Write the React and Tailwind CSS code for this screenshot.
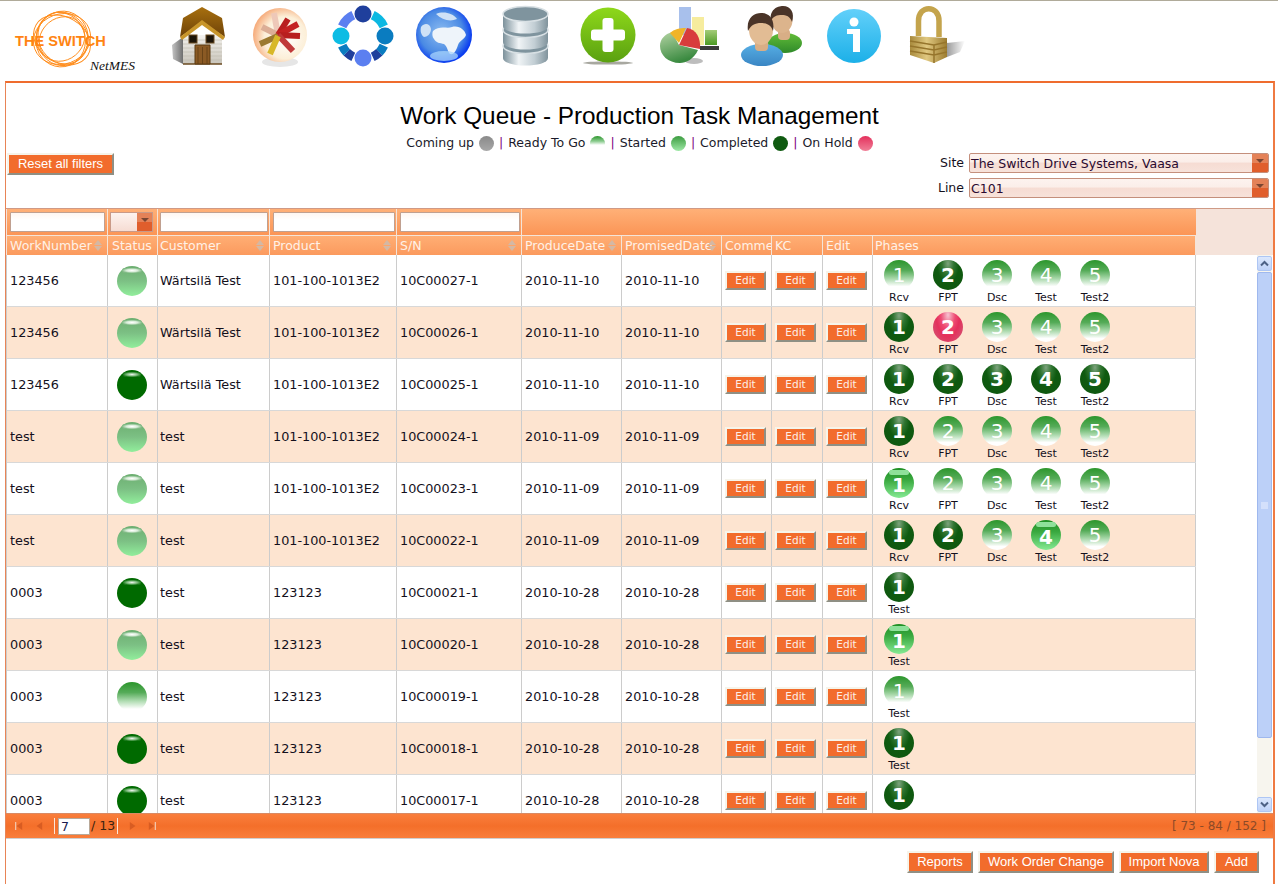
import React from 'react';

const rows = [
  { wn: '123456', status: 'started', cust: 'Wärtsilä Test', prod: '101-100-1013E2', sn: '10C00027-1', date: '2010-11-10', phases: ['ready', 'done', 'ready', 'ready', 'ready'] },
  { wn: '123456', status: 'started', cust: 'Wärtsilä Test', prod: '101-100-1013E2', sn: '10C00026-1', date: '2010-11-10', phases: ['done', 'hold', 'ready', 'ready', 'ready'] },
  { wn: '123456', status: 'done', cust: 'Wärtsilä Test', prod: '101-100-1013E2', sn: '10C00025-1', date: '2010-11-10', phases: ['done', 'done', 'done', 'done', 'done'] },
  { wn: 'test', status: 'started', cust: 'test', prod: '101-100-1013E2', sn: '10C00024-1', date: '2010-11-09', phases: ['done', 'ready', 'ready', 'ready', 'ready'] },
  { wn: 'test', status: 'started', cust: 'test', prod: '101-100-1013E2', sn: '10C00023-1', date: '2010-11-09', phases: ['started', 'ready', 'ready', 'ready', 'ready'] },
  { wn: 'test', status: 'started', cust: 'test', prod: '101-100-1013E2', sn: '10C00022-1', date: '2010-11-09', phases: ['done', 'done', 'ready', 'started', 'ready'] },
  { wn: '0003', status: 'done', cust: 'test', prod: '123123', sn: '10C00021-1', date: '2010-10-28', phases: ['done'] },
  { wn: '0003', status: 'started', cust: 'test', prod: '123123', sn: '10C00020-1', date: '2010-10-28', phases: ['started'] },
  { wn: '0003', status: 'ready', cust: 'test', prod: '123123', sn: '10C00019-1', date: '2010-10-28', phases: ['ready'] },
  { wn: '0003', status: 'done', cust: 'test', prod: '123123', sn: '10C00018-1', date: '2010-10-28', phases: ['done'] },
  { wn: '0003', status: 'done', cust: 'test', prod: '123123', sn: '10C00017-1', date: '2010-10-28', phases: ['done'] },
];

const phaseNames = ['Rcv', 'FPT', 'Dsc', 'Test', 'Test2'];

const cols = {
  wn: 'w-[101px]',
  status: 'w-[50px]',
  cust: 'w-[112px]',
  prod: 'w-[127px]',
  sn: 'w-[125px]',
  pd: 'w-[100px]',
  prom: 'w-[100px]',
  comm: 'w-[50px]',
  kc: 'w-[51px]',
  edit: 'w-[50px]',
  phases: 'w-[323px]',
};

const phaseBg = {
  ready: 'bg-[linear-gradient(#2c962c_0%,#55ab58_35%,#a8d8aa_62%,#ffffff_88%)]',
  started: 'bg-[linear-gradient(#1f8f24_0%,#3aa940_40%,#86ea94_100%)]',
  done: 'bg-[radial-gradient(ellipse_at_50%_12%,#7da37d_0%,#2f7430_28%,#0f5a10_52%,#0e560f_100%)]',
  hold: 'bg-[radial-gradient(ellipse_at_50%_10%,#f6c4d2_0%,#ee4a72_34%,#e4305c_55%,#cf5c78_100%)]',
};

function PhaseBall({ state, n }) {
  return (
    <div className={`relative w-[30px] h-[30px] rounded-full flex items-center justify-center ${phaseBg[state]}`}>
      {state === 'started' && <span className="absolute top-[2px] left-[5px] w-[20px] h-[5px] rounded-full bg-[#8fe09a]" />}
      <span className={`relative text-[20px] leading-none text-white ${state === 'ready' ? 'font-normal' : 'font-bold'} ${state === 'started' ? 'top-[2px]' : ''}`}>{n}</span>
    </div>
  );
}

function StatusBall({ state }) {
  if (state === 'done') {
    return (
      <div className="relative w-[30px] h-[30px] rounded-full bg-[#006a00]">
        <span className="absolute top-[2px] left-[6px] w-[18px] h-[5px] rounded-full bg-[radial-gradient(closest-side,#eef4ee_0%,#7ab87a_60%,#1a7a1a_100%)]" />
      </div>
    );
  }
  if (state === 'ready') {
    return <div className="w-[30px] h-[30px] rounded-full bg-[linear-gradient(#2c962c_0%,#55ab58_35%,#b4deb6_65%,#ffffff_90%)]" />;
  }
  return (
    <div className="relative w-[30px] h-[30px] rounded-full bg-[linear-gradient(#6cae70_0%,#7cc084_50%,#92ee9c_100%)]">
      <span className="absolute top-[2px] left-[5px] w-[20px] h-[5px] rounded-full bg-[radial-gradient(closest-side,#ffffff_0%,#d8ecd8_55%,#7fb984_100%)]" />
    </div>
  );
}

function LegendBall({ className }) {
  return <span className={`inline-block w-[15px] h-[15px] rounded-full ${className}`} />;
}

function EditButton() {
  return (
    <div className="w-[41px] h-[19px] flex items-center justify-center bg-[#f26c2c] border-[2px] border-t-[#f6f4ea] border-l-[#f6f4ea] border-r-[#8f8f84] border-b-[#8f8f84] text-[10.5px] text-[#fdeee6]">
      Edit
    </div>
  );
}

function OrangeButton({ w, children }) {
  return (
    <div className={`${w} h-[22px] flex items-center justify-center bg-[#f26c2c] border-[2px] border-t-[#f6f4ea] border-l-[#f6f4ea] border-r-[#8f8f84] border-b-[#8f8f84] text-[13px] text-white font-['Liberation_Sans',sans-serif]`}>
      {children}
    </div>
  );
}

function DropArrow({ w }) {
  return (
    <span className={`${w} h-full relative bg-[linear-gradient(#e48258_0%,#e48258_48%,#e05e2c_50%,#e05e2c_100%)]`}>
      <span className="absolute left-1/2 -translate-x-1/2 top-[5px] w-0 h-0 border-l-[4px] border-r-[4px] border-t-[4px] border-l-transparent border-r-transparent border-t-[#7a4632]" />
    </span>
  );
}

function SelectBox({ value }) {
  return (
    <div className="w-[300px] h-[20px] flex rounded-[2px] border border-[#c48f7c] bg-[linear-gradient(#fdf3ef_0%,#fbeee9_45%,#f6dcd3_50%,#f7e2da_100%)] overflow-hidden">
      <span className="flex-1 pl-[1px] text-[12.5px] leading-[20px] text-[#2a0a30]">{value}</span>
      <DropArrow w="w-[16px]" />
    </div>
  );
}

function SortArrows() {
  return (
    <span className="absolute right-[5px] top-[4px] flex flex-col gap-[1px]">
      <span className="w-0 h-0 border-l-[4px] border-r-[4px] border-b-[5px] border-l-transparent border-r-transparent border-b-[#d4b8a4]" />
      <span className="w-0 h-0 border-l-[4px] border-r-[4px] border-t-[5px] border-l-transparent border-r-transparent border-t-[#d4b8a4]" />
    </span>
  );
}

function HeadCell({ col, label, sort, pad = 'pl-[3px]' }) {
  return (
    <div className={`${col} ${pad} relative shrink-0 h-full border-r border-[#f4e4d8] overflow-hidden whitespace-nowrap text-[12.5px] leading-[19px] text-[#fff1e6]`}>
      {label}
      {sort && <SortArrows />}
    </div>
  );
}

function FilterInput({ col, w, pad = 'pl-[3px]' }) {
  return (
    <div className={`${col} ${pad} shrink-0 h-full border-r border-[#f4e4d8] pt-[3px]`}>
      <div className={`${w} h-[20px] bg-[linear-gradient(#fff6f0,#ffffff_40%)] border border-[#c0a090] rounded-[1px]`} />
    </div>
  );
}

function Cell({ col, children, pad = 'pl-[3px]' }) {
  return (
    <div className={`${col} ${pad} shrink-0 h-full flex items-center border-r border-[#cccccc] whitespace-nowrap overflow-hidden`}>
      {children}
    </div>
  );
}

function Logo() {
  return (
    <div className="relative w-[157px] h-[80px] shrink-0">
      <svg width="80" height="70" viewBox="0 0 80 70" className="absolute left-[22px] top-[5px]" fill="none" stroke="#ff8c1a" strokeWidth="0.9">
        <ellipse cx="40" cy="33" rx="29" ry="25" transform="rotate(-20 40 33)" />
        <ellipse cx="40" cy="33" rx="26" ry="28" transform="rotate(15 40 33)" />
        <ellipse cx="40" cy="34" rx="30" ry="23" transform="rotate(30 40 34)" />
        <ellipse cx="41" cy="32" rx="24" ry="27" transform="rotate(-35 41 32)" />
        <ellipse cx="39" cy="33" rx="27" ry="24" transform="rotate(70 39 33)" />
        <ellipse cx="40" cy="33" rx="21" ry="24" transform="rotate(50 40 33)" />
      </svg>
      <span className="absolute left-[15px] top-[31px] text-[14.6px] leading-[18px] font-bold text-[#ff8412] font-['Liberation_Sans',sans-serif] whitespace-nowrap">THE SWITCH</span>
      <span className="absolute left-[90px] top-[56px] text-[13.5px] leading-[18px] italic text-[#111] font-['Liberation_Serif',serif] whitespace-nowrap">NetMES</span>
    </div>
  );
}

function HouseIcon() {
  return (
    <svg width="64" height="64" viewBox="0 0 64 64">
      <defs>
        <linearGradient id="roof" x1="0" y1="0" x2="0" y2="1"><stop offset="0" stopColor="#a8700f" /><stop offset="1" stopColor="#6e4208" /></linearGradient>
        <linearGradient id="wall" x1="0" y1="0" x2="0" y2="1"><stop offset="0" stopColor="#f4f2ee" /><stop offset="1" stopColor="#c8c4ba" /></linearGradient>
        <linearGradient id="shade" x1="0" y1="0" x2="1" y2="0"><stop offset="0" stopColor="#c4c4c4" /><stop offset="1" stopColor="#6e6e6e" /></linearGradient>
      </defs>
      <path d="M17 32 L6 40 L7 54 L17 59 Z" fill="url(#shade)" />
      <path d="M17 30 H56 V59 H17 Z" fill="url(#wall)" />
      <path d="M17 59 H56" stroke="#6a4a20" strokeWidth="1.5" />
      <path d="M17 35 H56 M17 39 H56 M17 43 H56 M17 47 H56 M17 51 H56 M17 55 H56" stroke="#bdb8ac" strokeWidth="0.6" />
      <path d="M36 2 L56 13 L59 32 L36 17 L14 32 L17 13 Z" fill="url(#roof)" />
      <path d="M14 32 L36 15 L59 32 L57 35 L36 20 L16 35 Z" fill="#c8952a" />
      <rect x="23" y="30" width="8" height="8" fill="#1c1408" stroke="#6a4a20" />
      <rect x="40" y="30" width="8" height="8" fill="#1c1408" stroke="#6a4a20" />
      <path d="M29 40 H44 V59 H29 Z" fill="#8b5a24" stroke="#5a3a12" />
      <path d="M36.5 42 V59 M32 42 V59 M41 42 V59" stroke="#5a3a12" strokeWidth="0.7" />
    </svg>
  );
}

function SpokesIcon() {
  return (
    <svg width="64" height="64" viewBox="0 0 64 64">
      <defs>
        <radialGradient id="sph" cx="0.6" cy="0.55" r="0.6"><stop offset="0" stopColor="#ffffff" /><stop offset="0.65" stopColor="#fcefd8" /><stop offset="1" stopColor="#f6ac7c" /></radialGradient>
      </defs>
      <ellipse cx="32" cy="57" rx="18" ry="5" fill="#e6e6e6" />
      <circle cx="32" cy="30" r="27" fill="url(#sph)" />
      <g strokeWidth="6" strokeLinecap="butt" fill="none">
        <path d="M30 30 L26 8" stroke="#eec8b8" />
        <path d="M30 30 L14 22" stroke="#dcae96" />
        <path d="M30 30 L40 14" stroke="#b81f1f" />
        <path d="M30 30 L50 19" stroke="#c42222" />
        <path d="M30 30 L52 31" stroke="#b81f1f" />
        <path d="M30 30 L45 46" stroke="#c03a3a" />
        <path d="M30 31 L12 39" stroke="#9c7a30" />
        <path d="M30 31 L22 49" stroke="#d8b828" />
      </g>
    </svg>
  );
}

function RingIcon() {
  return (
    <svg width="64" height="64" viewBox="0 0 64 64">
      <g fill="none" strokeWidth="9">
        <path d="M42.7 10.2 A23 23 0 0 1 53.8 21.3" stroke="#0cb8e2" />
        <path d="M53.8 40.7 A23 23 0 0 1 49.3 47.3" stroke="#0a7cc0" />
        <path d="M49.3 47.3 A23 23 0 0 1 42.7 51.8" stroke="#1f3f9c" />
        <path d="M23.3 51.8 A23 23 0 0 1 16.7 47.3" stroke="#1f3f9c" />
        <path d="M16.7 47.3 A23 23 0 0 1 12.2 40.7" stroke="#0a7cc0" />
        <path d="M12.2 21.3 A23 23 0 0 1 23.3 10.2" stroke="#5b7ff0" />
      </g>
      <circle cx="33" cy="9" r="8.5" fill="#1f3f9c" />
      <circle cx="11" cy="31" r="8.5" fill="#0cbce4" />
      <circle cx="55" cy="31" r="8.5" fill="#0a7cc0" />
      <circle cx="33" cy="53" r="8.5" fill="#5b7ff0" />
    </svg>
  );
}

function GlobeIcon() {
  return (
    <svg width="64" height="64" viewBox="0 0 64 64">
      <defs>
        <radialGradient id="globe" cx="0.45" cy="0.45" r="0.55"><stop offset="0" stopColor="#8cbcf0" /><stop offset="0.7" stopColor="#4a8ae4" /><stop offset="1" stopColor="#0a3cf0" /></radialGradient>
      </defs>
      <circle cx="32" cy="30" r="28" fill="url(#globe)" />
      <path d="M21 26 C27 20 35 24 40 22 C47 20 53 25 54 30 C52 35 48 35 46 40 C44 46 42 50 38 49 C35 46 36 42 32 39 C28 38 24 38 22 34 C20 32 20 28 21 26 Z" fill="#eef4fa" />
      <path d="M9 22 C13 17 18 19 19 24 C19 29 15 32 12 32 C9 30 8 26 9 22 Z" fill="#cfe2f6" />
      <path d="M24 9 C31 6 41 8 45 14 C38 17 30 15 24 9 Z" fill="#cfe2f6" />
      <ellipse cx="32" cy="51" rx="14" ry="5" fill="#a8d4fc" opacity="0.75" />
    </svg>
  );
}

function DbIcon() {
  const disk = (y, id) => (
    <g key={id}>
      <path d={`M9 ${y} V${y + 12} C9 ${y + 22} 54 ${y + 22} 54 ${y + 12} V${y} Z`} fill="url(#steel)" />
      <ellipse cx="31.5" cy={y} rx="22.5" ry="7.5" fill="#7f949e" stroke="#d8e0e4" strokeWidth="1.5" />
    </g>
  );
  return (
    <svg width="64" height="64" viewBox="0 0 64 64">
      <defs>
        <linearGradient id="steel" x1="0" y1="0" x2="1" y2="0"><stop offset="0" stopColor="#7c919b" /><stop offset="0.35" stopColor="#f0f4f6" /><stop offset="0.7" stopColor="#c2ced4" /><stop offset="1" stopColor="#80939c" /></linearGradient>
      </defs>
      {disk(41, 'c')}
      {disk(25, 'b')}
      {disk(9, 'a')}
    </svg>
  );
}

function PlusIcon() {
  return (
    <svg width="64" height="64" viewBox="0 0 64 64">
      <defs>
        <linearGradient id="plus" x1="0" y1="0" x2="0" y2="1"><stop offset="0" stopColor="#8ed81a" /><stop offset="1" stopColor="#5aa010" /></linearGradient>
      </defs>
      <ellipse cx="32" cy="58" rx="25" ry="1.6" fill="#a8a8a0" />
      <circle cx="32" cy="30" r="27.5" fill="url(#plus)" />
      <rect x="26.5" y="13" width="11" height="34" rx="3" fill="#ffffff" />
      <rect x="15" y="24.5" width="34" height="11" rx="3" fill="#ffffff" />
    </svg>
  );
}

function ChartIcon() {
  return (
    <svg width="64" height="64" viewBox="0 0 64 64">
      <defs>
        <linearGradient id="pie" x1="0" y1="0" x2="0.4" y2="1"><stop offset="0" stopColor="#b4d4a4" /><stop offset="1" stopColor="#3a8a40" /></linearGradient>
        <linearGradient id="bar3" x1="0" y1="0" x2="0" y2="1"><stop offset="0" stopColor="#a4cc78" /><stop offset="1" stopColor="#4c9a24" /></linearGradient>
      </defs>
      <rect x="21" y="2" width="12" height="28" fill="#a8c0ec" />
      <rect x="34" y="12" width="12" height="28" fill="#f6ec9e" />
      <rect x="47" y="25" width="12" height="15" fill="url(#bar3)" />
      <rect x="42" y="41" width="19" height="4" fill="#3c3c3c" />
      <ellipse cx="36" cy="56" rx="9" ry="3" fill="#bdbdbd" />
      <path d="M14 27 L21 40 L40 45 C36 54 28 58 22 58 C10 58 2 50 2 41 C2 34 7 29 14 27 Z" fill="url(#pie)" />
      <path d="M12 28 C16 24 22 23 28 23 L21 38 Z" fill="#f0b428" />
      <path d="M21 40 L29 23 C38 24 43 33 42 44 Z" fill="#d83c3c" />
    </svg>
  );
}

function PeopleIcon() {
  return (
    <svg width="64" height="64" viewBox="0 0 64 64">
      <defs>
        <linearGradient id="shirtA" x1="0" y1="0" x2="0" y2="1"><stop offset="0" stopColor="#56aee4" /><stop offset="1" stopColor="#3a86c4" /></linearGradient>
        <linearGradient id="shirtB" x1="0" y1="0" x2="0" y2="1"><stop offset="0" stopColor="#62bc38" /><stop offset="1" stopColor="#2f8a2a" /></linearGradient>
      </defs>
      <ellipse cx="45" cy="38" rx="17" ry="10" fill="url(#shirtB)" />
      <rect x="38" y="24" width="12" height="11" rx="4" fill="#d8ae86" />
      <ellipse cx="42" cy="15" rx="10.5" ry="13" fill="#dcb48c" />
      <path d="M31 16 C29 5 37 1 43 1 C51 1 55 8 52 17 C50 11 46 10 42 10 C37 10 33 11 31 16 Z" fill="#4a3428" />
      <ellipse cx="22" cy="50" rx="21" ry="11" fill="url(#shirtA)" />
      <rect x="15" y="34" width="13" height="12" rx="4" fill="#d8ae86" />
      <ellipse cx="21" cy="25" rx="12" ry="15" fill="#e2bc94" />
      <path d="M8 26 C6 13 14 8 21 8 C30 8 35 15 33 26 C31 20 27 18 21 18 C15 18 11 20 8 26 Z" fill="#4a3428" />
    </svg>
  );
}

function InfoIcon() {
  return (
    <svg width="64" height="64" viewBox="0 0 64 64">
      <defs>
        <linearGradient id="info" x1="0" y1="0" x2="0" y2="1"><stop offset="0" stopColor="#62d0fa" /><stop offset="1" stopColor="#1cb0e8" /></linearGradient>
      </defs>
      <circle cx="32" cy="31" r="27" fill="url(#info)" />
      <circle cx="32" cy="17" r="4.5" fill="#ffffff" />
      <path d="M25 24 H38 V47 H31 V29 H25 Z" fill="#ffffff" />
    </svg>
  );
}

function LockIcon() {
  return (
    <svg width="64" height="64" viewBox="0 0 64 64">
      <defs>
        <linearGradient id="gold" x1="0" y1="0" x2="1" y2="0"><stop offset="0" stopColor="#a88a3c" /><stop offset="0.45" stopColor="#e0c880" /><stop offset="1" stopColor="#9c7c30" /></linearGradient>
        <linearGradient id="shadow" x1="0" y1="0" x2="1" y2="0"><stop offset="0" stopColor="#9c9c9c" /><stop offset="1" stopColor="#ffffff" /></linearGradient>
      </defs>
      <path d="M43 38 L61 36 L56 47 L43 52 Z" fill="url(#shadow)" />
      <path d="M14.5 31 V16 C14.5 -0.5 35 -0.5 35 16 V32" fill="none" stroke="#c4a44c" strokeWidth="5.5" />
      <path d="M6 31 L43 33 V52 L30 58 L6 50 Z" fill="url(#gold)" />
      <path d="M6 36 L30 40 L43 37 M6 41 L30 45 L43 42 M6 46 L30 50 L43 47 M30 40 V58" stroke="#96752c" strokeWidth="1.5" fill="none" />
    </svg>
  );
}

function PagerIcon({ dir, bar }) {
  return (
    <svg width="8" height="8" viewBox="0 0 10 10" className="shrink-0">
      <path d={dir === 'left' ? 'M9 0 V10 L2 5 Z' : 'M1 0 V10 L8 5 Z'} fill="#d85c22" />
      {bar && <rect x={dir === 'left' ? 0 : 8.4} y="0" width="1.6" height="10" fill="#f3c4a8" />}
    </svg>
  );
}

function ScrollButton({ up }) {
  return (
    <div className="w-[15px] h-[15px] shrink-0 flex items-center justify-center rounded-[2px] border border-[#aec6f4] bg-[linear-gradient(#dce8fd,#bfd2f8)]">
      <svg width="9" height="7" viewBox="0 0 9 7">
        <path d={up ? 'M1 5.5 L4.5 2 L8 5.5' : 'M1 1.5 L4.5 5 L8 1.5'} fill="none" stroke="#4d6185" strokeWidth="2" />
      </svg>
    </div>
  );
}

export default function App() {
  return (
    <div className="w-[1278px] h-[884px] overflow-hidden bg-white font-['DejaVu_Sans',sans-serif] text-[#14101c]">
      <div className="h-[81px] border-t border-[#b0ab9a] flex">
        <Logo />
        {[HouseIcon, SpokesIcon, RingIcon, GlobeIcon, DbIcon, PlusIcon, ChartIcon, PeopleIcon, InfoIcon, LockIcon].map((Icon, i) => (
          <div key={i} className="w-[82px] h-[72px] flex items-center justify-center">
            <Icon />
          </div>
        ))}
      </div>

      <div className="ml-[5px] w-[1270px] h-[803px] border-t-[2px] border-t-[#ef6c2e] border-l border-r-[2px] border-l-[#e88456] border-r-[#ef7a42] flex flex-col">
        <div className="h-[125px] shrink-0 relative flex flex-col items-center">
          <h1 className="mt-[19px] text-[24.3px] leading-[28px] text-[#000] font-normal font-['Liberation_Sans',sans-serif]">Work Queue - Production Task Management</h1>
          <div className="mt-[4px] flex items-center text-[12.5px] leading-[18px] text-[#1a1a2a]">
            <span>Coming up</span>
            <LegendBall className="ml-[5px] bg-[linear-gradient(#8a8a8a,#a8a8a8)]" />
            <span className="mx-[5px] text-[#800080]">|</span>
            <span>Ready To Go</span>
            <LegendBall className="ml-[5px] bg-[linear-gradient(#2c962c_0%,#8ccc90_35%,#ffffff_60%)]" />
            <span className="mx-[5px] text-[#800080]">|</span>
            <span>Started</span>
            <LegendBall className="ml-[5px] bg-[linear-gradient(#3c9c40,#9ee8a6)]" />
            <span className="mx-[5px] text-[#800080]">|</span>
            <span>Completed</span>
            <LegendBall className="ml-[5px] bg-[#0f5a10]" />
            <span className="mx-[5px] text-[#800080]">|</span>
            <span>On Hold</span>
            <LegendBall className="ml-[5px] bg-[linear-gradient(#e4305c,#f08098)]" />
          </div>
          <div className="absolute left-[1px] top-[70px]">
            <OrangeButton w="w-[107px]">Reset all filters</OrangeButton>
          </div>
          <div className="absolute right-[4px] top-[70px] flex flex-col gap-[5px]">
            <div className="h-[20px] flex items-center gap-[5px] justify-end">
              <span className="text-[12.5px] leading-[20px]">Site</span>
              <SelectBox value="The Switch Drive Systems, Vaasa" />
            </div>
            <div className="h-[20px] flex items-center gap-[5px] justify-end">
              <span className="text-[12.5px] leading-[20px]">Line</span>
              <SelectBox value="C101" />
            </div>
          </div>
        </div>

        <div className="h-[47px] shrink-0 border-t border-[#cf9a86] bg-[#f5e3da] pl-[1px]">
          <div className="w-[1189px] h-[27px] flex bg-[linear-gradient(#ffb077,#fb9556)] border-b border-[#f4e4d8]">
            <FilterInput col={cols.wn} w="w-[95px]" />
            <div className={`${cols.status} shrink-0 h-full border-r border-[#f4e4d8] pl-[2px] pt-[3px]`}>
              <div className="w-[43px] h-[20px] flex border border-[#c99a88] bg-[linear-gradient(#fdf3ef,#f6dcd3)]">
                <span className="flex-1" />
                <DropArrow w="w-[15px]" />
              </div>
            </div>
            <FilterInput col={cols.cust} w="w-[108px]" pad="pl-[2px]" />
            <FilterInput col={cols.prod} w="w-[122px]" />
            <FilterInput col={cols.sn} w="w-[120px]" />
          </div>
          <div className="w-[1189px] h-[19px] flex bg-[linear-gradient(#ffae74,#fb9a5e)]">
            <HeadCell col={cols.wn} label="WorkNumber" sort />
            <HeadCell col={cols.status} label="Status" pad="pl-[4px]" />
            <HeadCell col={cols.cust} label="Customer" sort pad="pl-[2px]" />
            <HeadCell col={cols.prod} label="Product" sort />
            <HeadCell col={cols.sn} label="S/N" sort />
            <HeadCell col={cols.pd} label="ProduceDate" sort />
            <HeadCell col={cols.prom} label="PromisedDate" sort />
            <HeadCell col={cols.comm} label="Comme" />
            <HeadCell col={cols.kc} label="KC" />
            <HeadCell col={cols.edit} label="Edit" />
            <HeadCell col={cols.phases} label="Phases" pad="pl-[2px]" />
          </div>
        </div>

        <div className="h-[558px] shrink-0 flex overflow-hidden">
          <div className="w-[1190px] shrink-0 border-l border-[#cccccc]">
            {rows.map((r, i) => (
              <div key={r.sn} className={`h-[52px] flex border-b border-[#d8d8d8] text-[12.8px] ${i % 2 === 1 ? 'bg-[#fde4d0]' : 'bg-white'}`}>
                <Cell col={cols.wn}>{r.wn}</Cell>
                <div className={`${cols.status} shrink-0 h-full flex items-center pl-[9px] border-r border-[#cccccc]`}>
                  <StatusBall state={r.status} />
                </div>
                <Cell col={cols.cust} pad="pl-[2px]">{r.cust}</Cell>
                <Cell col={cols.prod}>{r.prod}</Cell>
                <Cell col={cols.sn}>{r.sn}</Cell>
                <Cell col={cols.pd}>{r.date}</Cell>
                <Cell col={cols.prom}>{r.date}</Cell>
                <Cell col={cols.comm}><EditButton /></Cell>
                <Cell col={cols.kc}><EditButton /></Cell>
                <Cell col={cols.edit}><EditButton /></Cell>
                <div className={`${cols.phases} shrink-0 h-full flex pl-[1.5px] pt-[5px] border-r border-[#cccccc]`}>
                  {r.phases.map((p, j) => (
                    <div key={j} className="w-[49px] flex flex-col items-center">
                      <PhaseBall state={p} n={j + 1} />
                      <span className="mt-[1px] text-[11px] leading-[14px]">{r.phases.length === 1 ? 'Test' : phaseNames[j]}</span>
                    </div>
                  ))}
                </div>
              </div>
            ))}
          </div>
          <div className="w-[61px] shrink-0" />
          <div className="w-[15px] shrink-0 flex flex-col bg-[#f7f5ee] py-[1px]">
            <ScrollButton up />
            <div className="mt-[1px] h-[466px] shrink-0 rounded-[2px] border border-[#9fb8ee] bg-[#bcd0f8] flex items-center justify-center">
              <span className="w-[7px] h-[7px] bg-[#d4e0fb]" />
            </div>
            <div className="flex-1" />
            <ScrollButton />
          </div>
        </div>

        <div className="h-[26px] shrink-0 border-t border-[#d98a64] border-b border-b-[#cfcfcf] bg-[linear-gradient(#f97e3c_0%,#f46f2a_50%,#f97e3c_100%)] flex items-center pl-[9px] pr-[7px] text-[#3a2410]">
          <PagerIcon dir="left" bar />
          <span className="w-[12px]" />
          <PagerIcon dir="left" />
          <span className="ml-[11px] w-[1px] h-[16px] bg-[#fbe6d8]" />
          <span className="ml-[3px] w-[32px] h-[17px] bg-white border border-[#b8a898] pl-[2px] leading-[15px] text-[12.5px] text-[#1a1a50]">7</span>
          <span className="w-[27px] pl-[1px] whitespace-nowrap text-[12.5px]">/ 13</span>
          <span className="w-[1px] h-[16px] bg-[#fbe6d8]" />
          <span className="w-[11px]" />
          <PagerIcon dir="right" />
          <span className="w-[11px]" />
          <PagerIcon dir="right" bar />
          <span className="ml-auto text-[12px] text-[#8c4a28]">[ 73 - 84 / 152 ]</span>
        </div>

        <div className="flex justify-end gap-[5px] pt-[12px] pr-[14px]">
          <OrangeButton w="w-[66px]">Reports</OrangeButton>
          <OrangeButton w="w-[136px]">Work Order Change</OrangeButton>
          <OrangeButton w="w-[90px]">Import Nova</OrangeButton>
          <OrangeButton w="w-[45px]">Add</OrangeButton>
        </div>
      </div>
    </div>
  );
}
